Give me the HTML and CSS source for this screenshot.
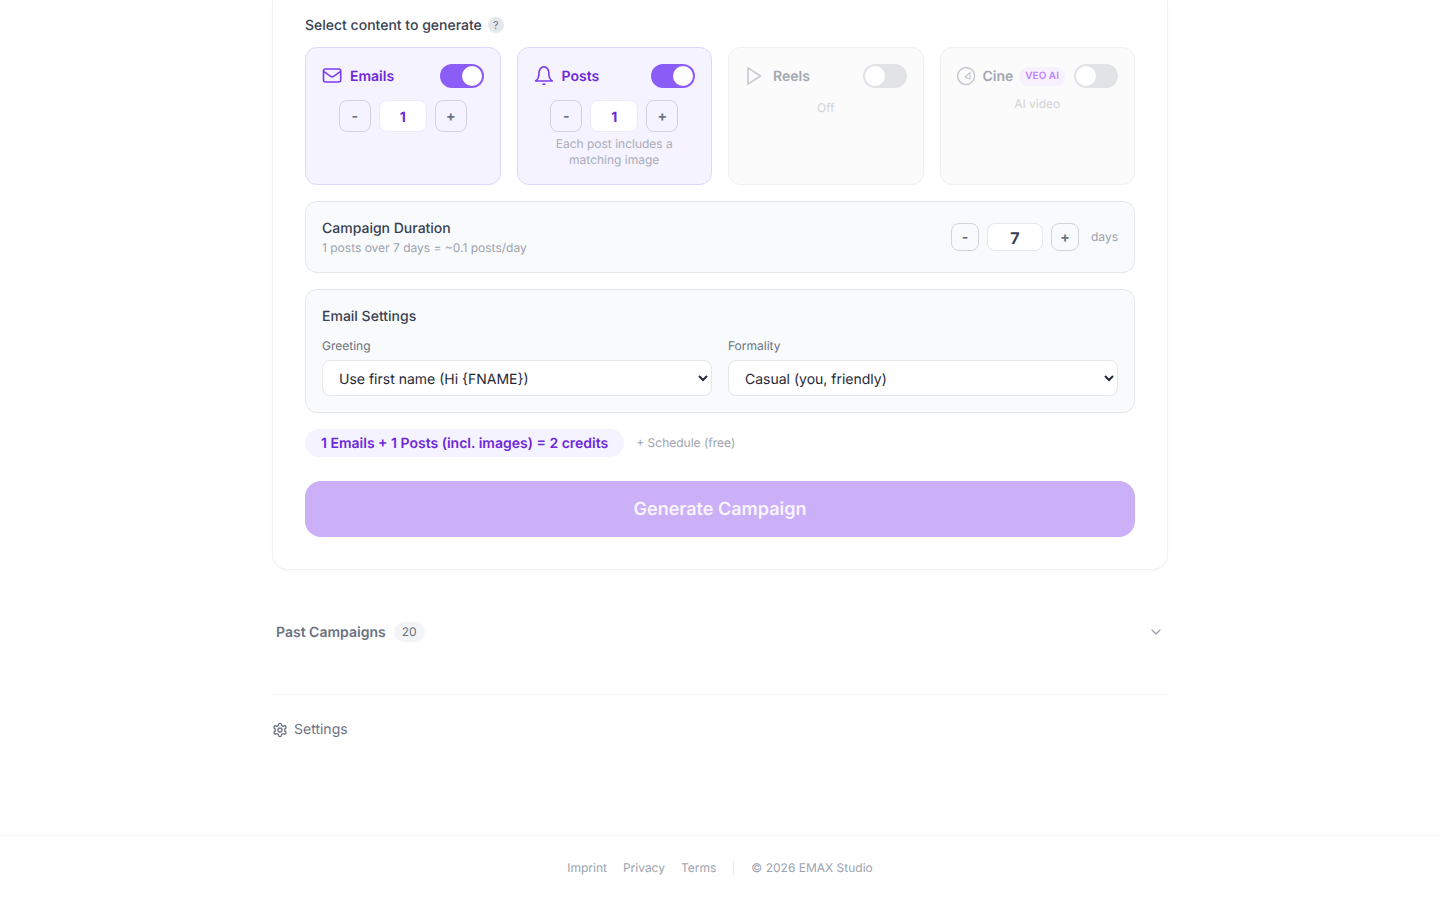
FILE: index.html
```html
<!DOCTYPE html>
<html lang="en">
<head>
  <meta charset="UTF-8" />
  <meta name="viewport" content="width=device-width, initial-scale=1.0" />
  <title>Generate Campaign</title>
  <link rel="stylesheet" href="styles.css">
</head>
<body>
  <main class="page">
    <section class="panel">
      <div class="section-label">
        <span>Select content to generate</span>
        <span class="help">?</span>
      </div>

      <div class="content-grid">
        <div class="type-card active">
          <div class="type-head">
            <svg class="type-icon" viewBox="0 0 22 22" fill="none" stroke="currentColor" stroke-width="1.6" stroke-linecap="round" stroke-linejoin="round"><rect x="1.5" y="4" width="17.2" height="13" rx="2"/><path d="M1.8 6.6l7.3 5a1.8 1.8 0 0 0 2 0l7.3-5"/></svg>
            <span class="type-name">Emails</span>
            <span class="toggle on"></span>
          </div>
          <div class="stepper">
            <button class="step">-</button>
            <span class="step-value">1</span>
            <button class="step">+</button>
          </div>
        </div>

        <div class="type-card active">
          <div class="type-head">
            <svg class="type-icon" viewBox="0 0 22 22" fill="none" stroke="currentColor" stroke-width="1.6" stroke-linecap="round" stroke-linejoin="round"><path d="M1.5 16H18.3C16.3 15 14.8 13 14.8 7.8A4.9 5.9 0 0 0 5 7.8C5 13 3.5 15 1.5 16Z"/><path d="M8.9 19.2H10.9"/></svg>
            <span class="type-name">Posts</span>
            <span class="toggle on"></span>
          </div>
          <div class="stepper">
            <button class="step">-</button>
            <span class="step-value">1</span>
            <button class="step">+</button>
          </div>
          <p class="type-hint">Each post includes a matching image</p>
        </div>

        <div class="type-card off">
          <div class="type-head">
            <svg class="type-icon" viewBox="0 0 22 22" fill="none" stroke="currentColor" stroke-width="1.6" stroke-linecap="round" stroke-linejoin="round"><polygon points="3 2.8 15.5 11 3 19.2"/></svg>
            <span class="type-name">Reels</span>
            <span class="toggle"></span>
          </div>
          <p class="type-note">Off</p>
        </div>

        <div class="type-card off cine">
          <div class="type-head">
            <svg class="type-icon" viewBox="0 0 22 22" fill="none" stroke="currentColor" stroke-width="1.6" stroke-linecap="round" stroke-linejoin="round"><path d="M3.7 4.57A8.4 8.4 0 1 1 2.67 5.6"/><polygon points="13 7.5 13 14 8 12" stroke-width="1.2"/></svg>
            <span class="type-name">Cine</span>
            <span class="veo">VEO AI</span>
            <span class="toggle"></span>
          </div>
          <p class="type-note">AI video</p>
        </div>
      </div>

      <div class="box duration">
        <div>
          <div class="box-title">Campaign Duration</div>
          <div class="box-sub">1 posts over 7 days = ~0.1 posts/day</div>
        </div>
        <div class="stepper small">
          <button class="step">-</button>
          <span class="step-value">7</span>
          <button class="step">+</button>
          <span class="unit">days</span>
        </div>
      </div>

      <div class="box email-settings">
        <div class="box-title">Email Settings</div>
        <div class="field-grid">
          <label class="field">
            <span class="field-label">Greeting</span>
            <select>
              <option>Use first name (Hi {FNAME})</option>
            </select>
          </label>
          <label class="field">
            <span class="field-label">Formality</span>
            <select>
              <option>Casual (you, friendly)</option>
            </select>
          </label>
        </div>
      </div>

      <div class="cost-row">
        <span class="cost-pill">1 Emails + 1 Posts (incl. images) = 2 credits</span>
        <span class="cost-extra">+ Schedule (free)</span>
      </div>

      <button class="generate">Generate Campaign</button>
    </section>

    <div class="past">
      <span class="past-title">Past Campaigns</span>
      <span class="count">20</span>
      <svg class="chevron" viewBox="0 0 24 24" fill="none" stroke="currentColor" stroke-width="2" stroke-linecap="round" stroke-linejoin="round"><path d="m6 9 6 6 6-6"/></svg>
    </div>

    <div class="settings-row">
      <svg class="gear" viewBox="0 0 24 24" fill="none" stroke="currentColor" stroke-width="2" stroke-linecap="round" stroke-linejoin="round"><path d="M12.22 2h-.44a2 2 0 0 0-2 2v.18a2 2 0 0 1-1 1.73l-.43.25a2 2 0 0 1-2 0l-.15-.08a2 2 0 0 0-2.73.73l-.22.38a2 2 0 0 0 .73 2.73l.15.1a2 2 0 0 1 1 1.72v.51a2 2 0 0 1-1 1.74l-.15.09a2 2 0 0 0-.73 2.73l.22.38a2 2 0 0 0 2.73.73l.15-.08a2 2 0 0 1 2 0l.43.25a2 2 0 0 1 1 1.73V20a2 2 0 0 0 2 2h.44a2 2 0 0 0 2-2v-.18a2 2 0 0 1 1-1.73l.43-.25a2 2 0 0 1 2 0l.15.08a2 2 0 0 0 2.73-.73l.22-.39a2 2 0 0 0-.73-2.73l-.15-.08a2 2 0 0 1-1-1.74v-.5a2 2 0 0 1 1-1.74l.15-.09a2 2 0 0 0 .73-2.73l-.22-.38a2 2 0 0 0-2.73-.73l-.15.08a2 2 0 0 1-2 0l-.43-.25a2 2 0 0 1-1-1.73V4a2 2 0 0 0-2-2z"/><circle cx="12" cy="12" r="3"/></svg>
      <span>Settings</span>
    </div>
  </main>

  <footer class="footer">
    <a href="#">Imprint</a>
    <a href="#">Privacy</a>
    <a href="#">Terms</a>
    <span class="footer-line"></span>
    <span>© 2026 EMAX Studio</span>
  </footer>
</body>
</html>
```

FILE: styles.css
```css
* {
  box-sizing: border-box;
}

html, body {
  height: 900px;
  overflow: hidden;
}

body {
  margin: 0;
  font-family: 'Inter', sans-serif;
  line-height: 1.5;
  text-rendering: geometricPrecision;
  background: #fff;
  color: #374151;
  display: flex;
  flex-direction: column;
}

p {
  margin: 0;
}

button, select {
  text-rendering: geometricPrecision;
}

.page {
  width: 896px;
  margin: 0 auto;
  flex: 1;
}

.panel {
  padding: 15px 32px 32px;
  border: 1px solid #f1f2f4;
  border-top: none;
  border-radius: 0 0 16px 16px;
  background: #fff;
  box-shadow: 0 1px 2px rgba(0, 0, 0, 0.03);
}

.section-label {
  display: flex;
  align-items: center;
  gap: 6px;
  height: 20px;
  font-size: 14px;
  font-weight: 500;
  color: #374151;
}

.help {
  width: 16px;
  height: 16px;
  border-radius: 50%;
  background: #e5e7eb;
  color: #6b7280;
  font-size: 11px;
  font-weight: 400;
  display: flex;
  align-items: center;
  justify-content: center;
}

.content-grid {
  display: grid;
  grid-template-columns: repeat(4, 1fr);
  gap: 16px;
  margin-top: 12px;
}

.type-card {
  height: 138px;
  padding: 16px;
  border: 1px solid #e5e7eb;
  border-radius: 12px;
}

.type-card.active {
  background: #f5f3ff;
  border-color: #ddd6fe;
}

.type-card.off {
  background: #fbfbfc;
  border-color: #f0f1f3;
}

.type-head {
  display: flex;
  align-items: center;
  gap: 6px;
  height: 24px;
  margin-bottom: 12px;
}

.type-icon {
  width: 22px;
  height: 22px;
  flex-shrink: 0;
  color: #7c3aed;
}

.type-name {
  font-size: 14px;
  font-weight: 600;
  color: #6d28d9;
}

.toggle {
  margin-left: auto;
  width: 44px;
  height: 24px;
  border-radius: 12px;
  background: #e2e3e7;
  position: relative;
  flex-shrink: 0;
}

.toggle::after {
  content: '';
  position: absolute;
  top: 2px;
  left: 2px;
  width: 20px;
  height: 20px;
  border-radius: 50%;
  background: #fff;
}

.toggle.on {
  background: #8b5cf6;
}

.toggle.on::after {
  left: 22px;
}

.off .type-icon {
  color: #c8cad1;
}

.off .type-name {
  color: #a3a7b1;
}

.cine .type-head {
  margin-bottom: 8px;
}

.cine .type-icon {
  margin-right: -2px;
}

.veo {
  padding: 2px 6px;
  border-radius: 10px;
  background: #f6f0ff;
  color: #c084fc;
  font-size: 10px;
  font-weight: 600;
  line-height: 15px;
}

.stepper {
  display: flex;
  align-items: center;
  justify-content: center;
  gap: 8px;
}

.step {
  width: 32px;
  height: 32px;
  padding: 0;
  border: 1px solid #d1d5db;
  border-radius: 8px;
  background: transparent;
  color: #6b7280;
  font-family: inherit;
  font-size: 14px;
  font-weight: 700;
}

.step-value {
  width: 48px;
  height: 32px;
  padding-top: 2px;
  border: 1px solid #ede9fe;
  border-radius: 8px;
  background: #fff;
  color: #6d28d9;
  font-size: 14px;
  font-weight: 700;
  line-height: normal;
  display: flex;
  align-items: center;
  justify-content: center;
}

.type-hint, .type-note {
  font-size: 12px;
  line-height: 16px;
  text-align: center;
}

.type-hint {
  margin-top: 4px;
  color: #a9adb8;
}

.type-note {
  color: #d1d3d9;
}

.box {
  margin-top: 16px;
  padding: 16px;
  border: 1px solid #e5e7eb;
  border-radius: 12px;
  background: #f9fafb;
}

.box-title {
  font-size: 14px;
  font-weight: 500;
  color: #374151;
}

.box-sub {
  font-size: 12px;
  color: #9ca3af;
}

.duration {
  padding-bottom: 15px;
  display: flex;
  align-items: center;
  justify-content: space-between;
}

.stepper.small {
  margin-bottom: 1px;
}

.stepper.small .step {
  width: 28px;
  height: 28px;
}

.stepper.small .step-value {
  width: 56px;
  height: 28px;
  border-color: #e5e7eb;
  color: #374151;
  font-size: 16px;
}

.unit {
  margin-left: 4px;
  font-size: 12px;
  color: #9ca3af;
}

.field-grid {
  display: grid;
  grid-template-columns: 1fr 1fr;
  gap: 16px;
  margin-top: 10px;
}

.field {
  display: block;
}

.field-label {
  display: block;
  font-size: 12px;
  margin-bottom: 5px;
  color: #6b7280;
}

select {
  display: block;
  width: 100%;
  height: 36px;
  padding: 2px 4px 0 12px;
  border: 1px solid #e5e7eb;
  border-radius: 8px;
  background: #fff;
  color: #1f2937;
  font-family: inherit;
  font-size: 14px;
}

.cost-row {
  display: flex;
  align-items: center;
  gap: 12px;
  margin-top: 16px;
}

.cost-pill {
  height: 28px;
  padding: 0 16px;
  border-radius: 14px;
  background: #f5f3ff;
  color: #6d28d9;
  font-size: 14px;
  font-weight: 600;
  display: flex;
  align-items: center;
}

.cost-extra {
  font-size: 12px;
  color: #9ca3af;
}

.generate {
  display: block;
  width: 100%;
  height: 56px;
  margin-top: 24px;
  padding: 0;
  border: none;
  border-radius: 16px;
  background: #cbb0f7;
  color: #f8f4fe;
  font-family: inherit;
  font-size: 18px;
  font-weight: 600;
}

.past {
  display: flex;
  align-items: center;
  gap: 8px;
  height: 32px;
  margin-top: 46px;
  padding: 0 4px;
}

.past-title {
  font-size: 14px;
  font-weight: 600;
  color: #6b7280;
}

.count {
  height: 20px;
  padding: 0 8px;
  border-radius: 10px;
  background: #f3f4f6;
  color: #6b7280;
  font-size: 12px;
  display: flex;
  align-items: center;
}

.chevron {
  margin-left: auto;
  width: 16px;
  height: 16px;
  color: #9ca3af;
}

.settings-row {
  display: flex;
  align-items: center;
  gap: 6px;
  height: 70px;
  margin-top: 46px;
  border-top: 1px solid #f3f4f6;
  font-size: 14px;
  color: #6b7280;
}

.gear {
  width: 16px;
  height: 16px;
}

.footer {
  height: 65px;
  border-top: 1px solid #f3f4f6;
  display: flex;
  align-items: center;
  justify-content: center;
  gap: 16px;
  font-size: 12px;
  color: #9ca3af;
}

.footer a {
  color: inherit;
  text-decoration: none;
}

.footer-line {
  width: 1px;
  height: 14px;
  margin: 0 1px;
  background: #e5e7eb;
}
```
